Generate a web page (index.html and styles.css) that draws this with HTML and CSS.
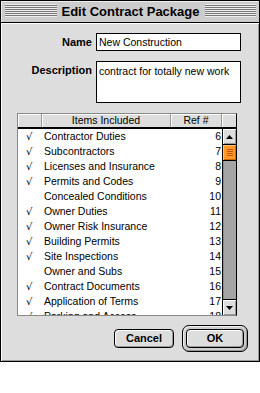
FILE: index.html
```html
<!DOCTYPE html>
<html lang="en">
<head>
    <meta charset="UTF-8">
    <meta name="viewport" content="width=device-width, initial-scale=1.0">
    <title>Edit Contract Package</title>
    <link rel="stylesheet" href="styles.css">
</head>
<body>
    <div class="window">
        <div class="titlebar">
            <div class="stripes"></div>
            <div class="title">Edit Contract Package</div>
            <div class="stripes"></div>
        </div>

        <div class="content">
            <div class="form">
                <div class="label name-label">Name</div>
                <div class="field name-field">New Construction</div>
                <div class="label desc-label">Description</div>
                <div class="field desc-field">contract for totally new work</div>
            </div>

            <div class="list">
                <div class="list-head">
                    <div class="head-cell"></div>
                    <div class="head-cell">Items Included</div>
                    <div class="head-cell">Ref #</div>
                    <div class="head-corner"></div>
                </div>
                <div class="list-body">
                    <div class="rows">
                        <div class="row"><span class="check">√</span><span class="item">Contractor Duties</span><span class="ref">6</span></div>
                        <div class="row"><span class="check">√</span><span class="item">Subcontractors</span><span class="ref">7</span></div>
                        <div class="row"><span class="check">√</span><span class="item">Licenses and Insurance</span><span class="ref">8</span></div>
                        <div class="row"><span class="check">√</span><span class="item">Permits and Codes</span><span class="ref">9</span></div>
                        <div class="row"><span class="check"></span><span class="item">Concealed Conditions</span><span class="ref">10</span></div>
                        <div class="row"><span class="check">√</span><span class="item">Owner Duties</span><span class="ref">11</span></div>
                        <div class="row"><span class="check">√</span><span class="item">Owner Risk Insurance</span><span class="ref">12</span></div>
                        <div class="row"><span class="check">√</span><span class="item">Building Permits</span><span class="ref">13</span></div>
                        <div class="row"><span class="check">√</span><span class="item">Site Inspections</span><span class="ref">14</span></div>
                        <div class="row"><span class="check"></span><span class="item">Owner and Subs</span><span class="ref">15</span></div>
                        <div class="row"><span class="check">√</span><span class="item">Contract Documents</span><span class="ref">16</span></div>
                        <div class="row"><span class="check">√</span><span class="item">Application of Terms</span><span class="ref">17</span></div>
                        <div class="row"><span class="check">√</span><span class="item">Parking and Access</span><span class="ref">18</span></div>
                    </div>
                    <div class="scrollbar">
                        <div class="arrow arrow-up">
                            <svg width="7" height="4" viewBox="0 0 7 4"><polygon points="3.5,0 7,4 0,4" fill="#000"/></svg>
                        </div>
                        <div class="thumb"><div class="grip"></div></div>
                        <div class="track"></div>
                        <div class="arrow arrow-down">
                            <svg width="7" height="4" viewBox="0 0 7 4"><polygon points="0,0 7,0 3.5,4" fill="#000"/></svg>
                        </div>
                    </div>
                </div>
            </div>

            <div class="buttons">
                <div class="button cancel">Cancel</div>
                <div class="default-ring">
                    <div class="button ok">OK</div>
                </div>
            </div>
        </div>
    </div>
</body>
</html>
```

FILE: styles.css
```css
body{
    margin: 0;
    background: #fff;
    font-family: "Liberation Sans", Arial, sans-serif;
    color: #000;
}
.window{
    width: 258px;
    height: 360px;
    border: 1px solid #000;
    background: #dddddd;
    display: flex;
    flex-direction: column;
}
.titlebar{
    height: 21px;
    flex: none;
    border-bottom: 1px solid #000;
    background: #cccccc;
    box-shadow: inset 1px 1px 0 #eee;
    display: flex;
    align-items: flex-start;
    gap: 4px;
    padding: 0 3px 0 4px;
}
.stripes{
    flex: 1;
    height: 13px;
    margin-top: 3px;
    background: repeating-linear-gradient(to bottom, #eeeeee 0 1px, #777777 1px 2px);
}
.title{
    font-size: 13px;
    font-weight: bold;
    line-height: 21px;
    padding: 0 1px;
}
.content{
    flex: 1;
    padding-top: 10px;
    box-shadow: inset 1px 1px 0 #fff, inset -1px -1px 0 #999;
}
.form{
    display: grid;
    grid-template-columns: 91px 145px;
    column-gap: 4px;
    row-gap: 10px;
}
.label{
    text-align: right;
    font-weight: bold;
    font-size: 11px;
}
.name-label{
    line-height: 18px;
}
.desc-label{
    line-height: 14px;
    padding-top: 2px;
}
.field{
    border: 1px solid #000;
    background: #fff;
    font-size: 10.5px;
    padding: 0 2px;
    box-sizing: border-box;
}
.name-field{
    height: 18px;
    line-height: 16px;
}
.desc-field{
    height: 42px;
    line-height: 14px;
    padding-top: 2px;
}
.list{
    margin: 10px 0 0 16px;
    width: 218px;
    border: 1px solid #888;
    border-right-color: #000;
}
.list-head{
    display: grid;
    grid-template-columns: 24px 129px 51px 14px;
    height: 13px;
    border-bottom: 2px solid #000;
    background: #dddddd;
}
.head-cell{
    font-size: 10.5px;
    line-height: 13px;
    text-align: center;
    border-right: 1px solid #999;
    box-shadow: inset 1px 1px 0 #fff;
    overflow: hidden;
}
.head-corner{
    box-shadow: inset 1px 1px 0 #fff;
}
.list-body{
    display: flex;
    height: 186px;
}
.rows{
    flex: 1;
    overflow: hidden;
    background: #fff;
}
.row{
    display: grid;
    grid-template-columns: 24px 129px 51px;
    height: 15px;
    line-height: 15px;
    font-size: 10.5px;
    white-space: nowrap;
}
.check{
    padding-left: 8px;
    font-family: "DejaVu Sans", sans-serif;
    font-size: 10px;
}
.item{
    padding-left: 2px;
}
.ref{
    text-align: right;
    padding-right: 1px;
}
.scrollbar{
    width: 13px;
    border-left: 1px solid #000;
    background: #a5a5a5;
    box-shadow: inset 1px 0 0 #8a8a8a;
    display: flex;
    flex-direction: column;
}
.arrow{
    height: 15px;
    background: #dddddd;
    box-shadow: inset 1px 1px 0 #fff, inset -1px -1px 0 #999;
    display: flex;
    align-items: center;
    justify-content: center;
}
.arrow-up{
    border-bottom: 1px solid #000;
}
.arrow-down{
    border-top: 1px solid #000;
}
.thumb{
    height: 15px;
    border-bottom: 1px solid #000;
    background: #ff9a2a;
    box-shadow: inset 1px 1px 0 #ffc57a, inset -1px -1px 0 #cc6a00;
    display: flex;
    align-items: center;
    justify-content: center;
}
.grip{
    width: 6px;
    height: 7px;
    background: repeating-linear-gradient(to bottom, #c85000 0 1px, transparent 1px 2px);
}
.track{
    flex: 1;
}
.buttons{
    display: flex;
    justify-content: flex-end;
    align-items: center;
    gap: 8px;
    margin-top: 9px;
    padding-right: 11px;
}
.button{
    height: 19px;
    box-sizing: border-box;
    border: 1px solid #000;
    border-radius: 4px;
    background: #dddddd;
    box-shadow: inset 1px 1px 0 #fff, inset -1px -1px 0 #999;
    font-size: 11px;
    font-weight: bold;
    line-height: 17px;
    text-align: center;
}
.cancel{
    width: 60px;
}
.ok{
    width: 58px;
}
.default-ring{
    border: 1px solid #000;
    border-radius: 7px;
    padding: 3px;
    background: #cccccc;
    box-shadow: inset 1px 1px 0 #eee, inset -1px -1px 0 #999;
}
```
